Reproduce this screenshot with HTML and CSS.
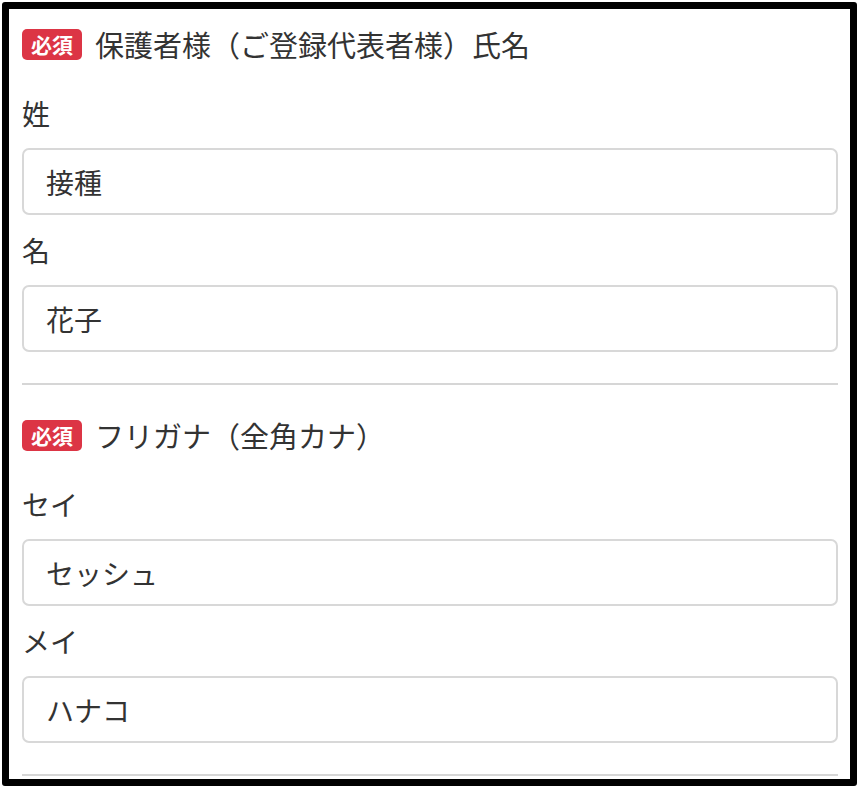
FILE: index.html
```html
<!DOCTYPE html>
<html lang="ja">
<head>
    <meta charset="UTF-8">
    <meta name="viewport" content="width=device-width, initial-scale=1.0">
    <title>保護者様情報</title>
    <link rel="stylesheet" href="styles.css">
</head>
<body>
    <div class="frame">
        <div class="form-body">
            <section class="form-group">
                <div class="group-title">
                    <span class="badge-required">必須</span>
                    <span>保護者様（ご登録代表者様）氏名</span>
                </div>
                <div class="field">
                    <label for="lastName">姓</label>
                    <input type="text" id="lastName" value="接種">
                </div>
                <div class="field">
                    <label for="firstName">名</label>
                    <input type="text" id="firstName" value="花子">
                </div>
            </section>
            <hr class="divider">

            <section class="form-group">
                <div class="group-title">
                    <span class="badge-required">必須</span>
                    <span>フリガナ（全角カナ）</span>
                </div>
                <div class="field">
                    <label for="lastKana">セイ</label>
                    <input type="text" id="lastKana" value="セッシュ">
                </div>
                <div class="field">
                    <label for="firstKana">メイ</label>
                    <input type="text" id="firstKana" value="ハナコ">
                </div>
            </section>
            <hr class="divider">
        </div>
    </div>
</body>
</html>
```

FILE: styles.css
```css
body {
    margin: 0;
    padding: 0;
    background-color: white;
    font-family: "Noto Sans CJK JP", "Noto Sans", sans-serif;
    color: #333;
}

.frame {
    margin: 2px 1px 0 2px;
    border: 7px solid black;
    border-radius: 3px;
    height: 770px;
    background-color: white;
    overflow: hidden;
}

.form-body {
    padding: 14px 12px 0 13px;
}

.form-group + .divider {
    margin-top: 31px;
}

.divider + .form-group {
    margin-top: 29px;
}

.group-title {
    display: flex;
    align-items: center;
    gap: 13px;
    height: 42px;
    font-size: 29px;
    margin-bottom: 27px;
}

.badge-required {
    background-color: #dc3545;
    color: white;
    font-weight: bold;
    font-size: 21px;
    line-height: 31px;
    height: 31px;
    padding: 0 9px;
    border-radius: 5px;
}

.field + .field {
    margin-top: 14px;
}

.field label {
    display: block;
    font-size: 28px;
    line-height: 42px;
    margin-bottom: 14px;
}

.field input {
    display: block;
    box-sizing: border-box;
    width: 100%;
    height: 67px;
    padding: 0 22px;
    border: 2px solid #d8d8d8;
    border-radius: 7px;
    font-family: inherit;
    font-size: 28px;
    color: #333;
    background-color: white;
    outline: none;
}

.divider {
    border: none;
    border-top: 2px solid #d6d6d6;
    margin: 0;
}
```
